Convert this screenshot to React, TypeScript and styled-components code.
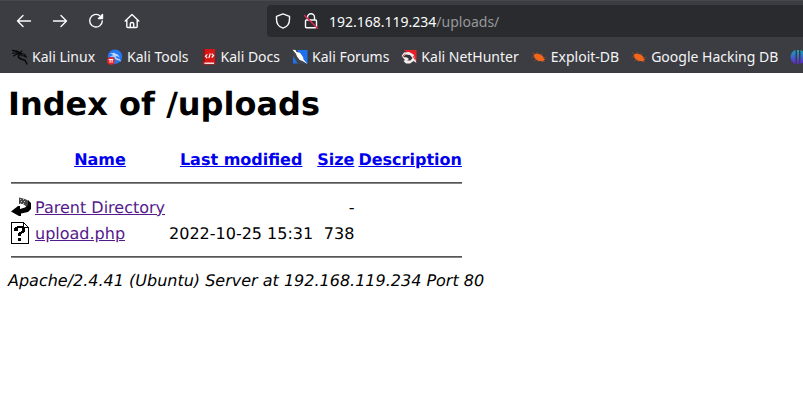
import React from "react";
import styled, { createGlobalStyle } from "styled-components";

const GlobalStyle = createGlobalStyle`
  * { box-sizing: border-box; }
  body { margin: 0; background: #fff; color: #000; overflow-x: hidden; }
`;

const Chrome = styled.header`
  background: #3c3d42;
  border-top: 1px solid #47484d;
  color: #fbfbfe;
  font-family: "Noto Sans", sans-serif;
  overflow: hidden;
`;

const Toolbar = styled.nav`
  display: flex;
  align-items: center;
  height: 40px;
  padding-left: 6px;
`;

const ToolButton = styled.button`
  flex: none;
  display: grid;
  place-items: center;
  width: 36px;
  height: 32px;
  padding: 0;
  border: 0;
  background: none;
  color: inherit;
`;

const AddressBar = styled.div`
  flex: 1;
  display: flex;
  align-items: center;
  height: 32px;
  margin-left: 117px;
  padding-left: 8px;
  gap: 12px;
  border-radius: 4px 0 0 4px;
  background: #2a2b2e;
  font-size: 14px;
`;

const BarButton = styled(ToolButton)`
  width: 16px;
`;

const Address = styled.a`
  margin-left: -2px;
  color: #fbfbfe;
  text-decoration: none;
  white-space: nowrap;
`;

const Path = styled.span`
  color: #97979b;
`;

const Bookmarks = styled.div`
  display: flex;
  align-items: center;
  gap: 12px;
  height: 32px;
  padding-left: 12px;
  white-space: nowrap;
`;

const Bookmark = styled.a`
  flex: none;
  display: flex;
  align-items: center;
  gap: 4px;
  color: #f4f4f6;
  font-size: 14px;
  line-height: 20px;
  text-decoration: none;
`;

const Icon = styled.svg`
  display: block;
  flex: none;
  width: 16px;
  height: 16px;
`;

const Listing = styled.main`
  padding: 12px 8px 8px;
  font-family: "DejaVu Sans", sans-serif;
  font-size: 16px;
  line-height: 19px;
  text-rendering: geometricPrecision;
`;

const Title = styled.h1`
  margin: 0 0 24px;
  font-size: 32px;
  line-height: 38px;
  font-weight: bold;
`;

const FileTable = styled.table`
  border-spacing: 2px;
  th, td { padding: 1px; white-space: nowrap; }
  th { line-height: 20px; }
`;

const NumberCell = styled.td`
  text-align: right;
`;

const Rule = styled.hr`
  height: 2px;
  margin: 8px 0;
  border: 0;
  border-top: 1px solid #555;
  background: #858585;
`;

const FileIcon = styled.svg`
  display: block;
  width: 20px;
  height: 22px;
`;

const Link = styled.a<{ $visited?: boolean }>`
  color: ${(p) => (p.$visited ? "#551a8b" : "#0000ee")};
  text-decoration: underline;
`;

const Signature = styled.address`
  font-style: italic;
  margin-top: 2px;
`;

const Line = ({ children }: { children: React.ReactNode }) => (
  <Icon viewBox="0 0 16 16" fill="none" stroke="currentColor" strokeWidth="1.4" strokeLinecap="round" strokeLinejoin="round">
    {children}
  </Icon>
);

const Bug = () => (
  <Icon viewBox="0 0 16 16">
    <path d="M1 3.5 5 6M.5 8h4M3 12l4-2M6 3l2 3M11 4l-1 3M15.5 8.5 12 9M14 13l-3-3M7 13l2-3" stroke="#8e4930" strokeWidth=".8" fill="none" />
    <path d="M2.500 6 5 4.500l4 .7 3 2 .7 2.300 1.500 1-1.500.8-.5 1.500-2.200-.7-3-.3-3-2.300Z" fill="#f2651b" />
  </Icon>
);

const bookmarks: { name: string; iconOnly?: boolean; icon: React.ReactNode }[] = [
  {
    name: "Kali Linux",
    icon: (
      <Icon viewBox="0 0 16 16" fill="none" stroke="#08080a" strokeLinecap="round" strokeLinejoin="round">
        <path d="M.5 1.500 5 2.200 9.500 4.800 6.500 6.300 6.500 8.500 9 10 13 11.300 15 15" strokeWidth="1.500" />
        <path d="M.5 4.200 5 3.700 8 4.700M1.500 7 5 5 8 5M8 3.500l2-1.500M9.500 4.500l3 .7 2 3-3-1.500H9" strokeWidth="1.100" />
      </Icon>
    ),
  },
  {
    name: "Kali Tools",
    icon: (
      <Icon viewBox="0 0 16 16">
        <circle cx="8" cy="7.700" r="7.200" fill="#2777f0" />
        <path d="M3 4.500 7 3.700l4 2.100 2 3-2.500-1.500H8.500l1 1.700 3.300 1.300 1.400 2.400-2-1.300-3.400-1-1.800-2.600L2.500 8l4-2Z" fill="#bcd7ff" />
        <circle cx="4" cy="11.800" r="3.900" fill="#e52629" />
        <path d="M1.800 10.500h4.500M3.100 10.500v3.200M5.100 10.500v3.200" stroke="#fff" fill="none" />
      </Icon>
    ),
  },
  {
    name: "Kali Docs",
    icon: (
      <Icon viewBox="0 0 16 16">
        <path d="M2 0h12v15.500H2Z" fill="#da1515" />
        <path d="M2 0h2v13H2Z" fill="#8f1719" />
        <path d="M3.500 13.500H13V15H3.500Z" fill="#f3dede" />
        <path d="M6.300 5.300 4.400 7.200l1.900 1.900M10.700 4.700l1.900 1.900-1.900 1.900M9.300 4.500 7.800 9" stroke="#fff" strokeWidth="1.200" fill="none" />
      </Icon>
    ),
  },
  {
    name: "Kali Forums",
    icon: (
      <Icon viewBox="0 0 16 16">
        <path d="M1 1h14.500v13.500H1Z" fill="#1d72ee" />
        <path d="M1 1h4l9 14H6L1 7Z" fill="#42444b" />
        <path d="M.5.800 3.500 1l1 2 3.500.7 3 4.300.5 2.500 4 4.500-5-3-2.800-1L5 7.500 4 4.700Z" fill="#fff" />
      </Icon>
    ),
  },
  {
    name: "Kali NetHunter",
    icon: (
      <Icon viewBox="0 0 16 16">
        <path d="M3 1h12.500v11.500Z" fill="#e5202b" />
        <path d="M.5 7 3 3.500 8 3l4.500 2.500 1.500 4 1.500 4.500-3-2-3.500 2.500H5L2.500 12l1.500-1Z" fill="#f6eeee" />
        <path d="M2 8 5 5.500l4 .5 2.500 3-2 2.500H6l2-1.500-2-1.500Z" fill="#33343a" />
        <path d="M1.500 7.500 4.500 5M12 7l2 3.500" stroke="#d52b36" fill="none" />
      </Icon>
    ),
  },
  { name: "Exploit-DB", icon: <Bug /> },
  { name: "Google Hacking DB", icon: <Bug /> },
  {
    name: "OffSec",
    iconOnly: true,
    icon: (
      <Icon viewBox="0 0 16 16">
        <defs>
          <linearGradient id="offsec" x1="0" y1="0" x2="0" y2="1">
            <stop offset="0" stopColor="#16a8bd" />
            <stop offset="1" stopColor="#6420d7" />
          </linearGradient>
        </defs>
        <path d="M5.500 1v14C2.500 14 .5 11.300.5 8S2.500 2 5.500 1ZM7 1h2v14H7ZM10.500 1c3 1 5 3.700 5 7s-2 6-5 7Z" fill="url(#offsec)" />
      </Icon>
    ),
  },
];

const BackIcon = () => (
  <FileIcon viewBox="0 0 20 22">
    <path d="M8 1.500l6 1.500 4 2 1 4-3 2-4-3H8Z" fill="#444" />
    <path d="M9 3h1v1H9Zm3 0h1v1h-1Zm-2 2h1v1h-1Zm3 0h1v1h-1Zm-4 2h1v1H9Zm3 0h1v1h-1Z" fill="#bbb" />
    <path d="M17 4l3 3v6l-3 3-7 1.500V20H8l-8-4.500L7 10h2v3l5-1.500 3-2.500Z" fill="#000" />
  </FileIcon>
);

const UnknownIcon = () => (
  <FileIcon viewBox="0 0 20 22" shapeRendering="crispEdges">
    <path d="M.5.500h12l5 5v16H.5Z" fill="#fff" stroke="#000" />
    <path d="M12.500.5v5h5M17 6v16M0 21h18" fill="none" stroke="#000" />
    <path d="M3 6h1V5h2V4h6v1h1v1h1v4h-1v1h-2v1h-1v2H7v-3h1v-1h2V9h1V6H7v3H3ZM7 16h3v3H7Z" fill="#000" />
  </FileIcon>
);

export default function App() {
  return (
    <>
      <GlobalStyle />
      <Chrome>
        <Toolbar aria-label="Navigation">
          <ToolButton aria-label="Back"><Line><path d="M14.500 8h-13M7 2.500 1.500 8 7 13.500" /></Line></ToolButton>
          <ToolButton aria-label="Forward"><Line><path d="M1.500 8h13M9 2.500 14.500 8 9 13.500" /></Line></ToolButton>
          <ToolButton aria-label="Reload">
            <Line>
              <path d="M11.500 2.500A6.300 6.300 0 1 0 14.300 8" />
              <path d="M14.500 1.500v4h-4Z" fill="currentColor" />
            </Line>
          </ToolButton>
          <ToolButton aria-label="Home"><Line><path d="M1.200 8 8 1.500 14.800 8M2.800 7v6.500q0 1 1 1h8.400q1 0 1-1V7M6.300 14.300v-3.500q0-1.300 1.700-1.300t1.700 1.300v3.500" /></Line></ToolButton>
          <AddressBar>
            <BarButton aria-label="Tracking protection"><Line><path d="M8 .9 14.500 3.300v3C14.500 10.500 12 14 8 15.200 4 14 1.500 10.500 1.500 6.300v-3Z" /></Line></BarButton>
            <BarButton aria-label="Connection is not secure">
              <Line>
                <path d="M4.500 7V4.200a3.500 3.500 0 0 1 7 0V7M3.500 7h9q1 0 1 1v5.700q0 1-1 1h-9q-1 0-1-1V8q0-1 1-1Z" />
                <path d="M1.500 2.500 14.500 15.300" stroke="#e22850" />
              </Line>
            </BarButton>
            <Address href="#address">192.168.119.234<Path>/uploads/</Path></Address>
          </AddressBar>
        </Toolbar>
        <Bookmarks>
          {bookmarks.map((b) => (
            <Bookmark key={b.name} href="#bookmark" aria-label={b.name}>
              {b.icon}
              {!b.iconOnly && <span>{b.name}</span>}
            </Bookmark>
          ))}
        </Bookmarks>
      </Chrome>
      <Listing>
        <Title>Index of /uploads</Title>
        <FileTable>
          <thead>
            <tr>
              <th aria-label="Type" />
              <th><Link href="#name">Name</Link></th>
              <th><Link href="#modified">Last modified</Link></th>
              <th><Link href="#size">Size</Link></th>
              <th><Link href="#description">Description</Link></th>
            </tr>
            <tr><th colSpan={5}><Rule /></th></tr>
          </thead>
          <tbody>
            <tr>
              <td><BackIcon /></td>
              <td><Link $visited href="#parent">Parent Directory</Link></td>
              <td />
              <NumberCell>-</NumberCell>
              <td />
            </tr>
            <tr>
              <td><UnknownIcon /></td>
              <td><Link $visited href="#upload">upload.php</Link></td>
              <NumberCell>2022-10-25 15:31</NumberCell>
              <NumberCell>738</NumberCell>
              <td />
            </tr>
            <tr><td colSpan={5}><Rule /></td></tr>
          </tbody>
        </FileTable>
        <Signature>Apache/2.4.41 (Ubuntu) Server at 192.168.119.234 Port 80</Signature>
      </Listing>
    </>
  );
}
